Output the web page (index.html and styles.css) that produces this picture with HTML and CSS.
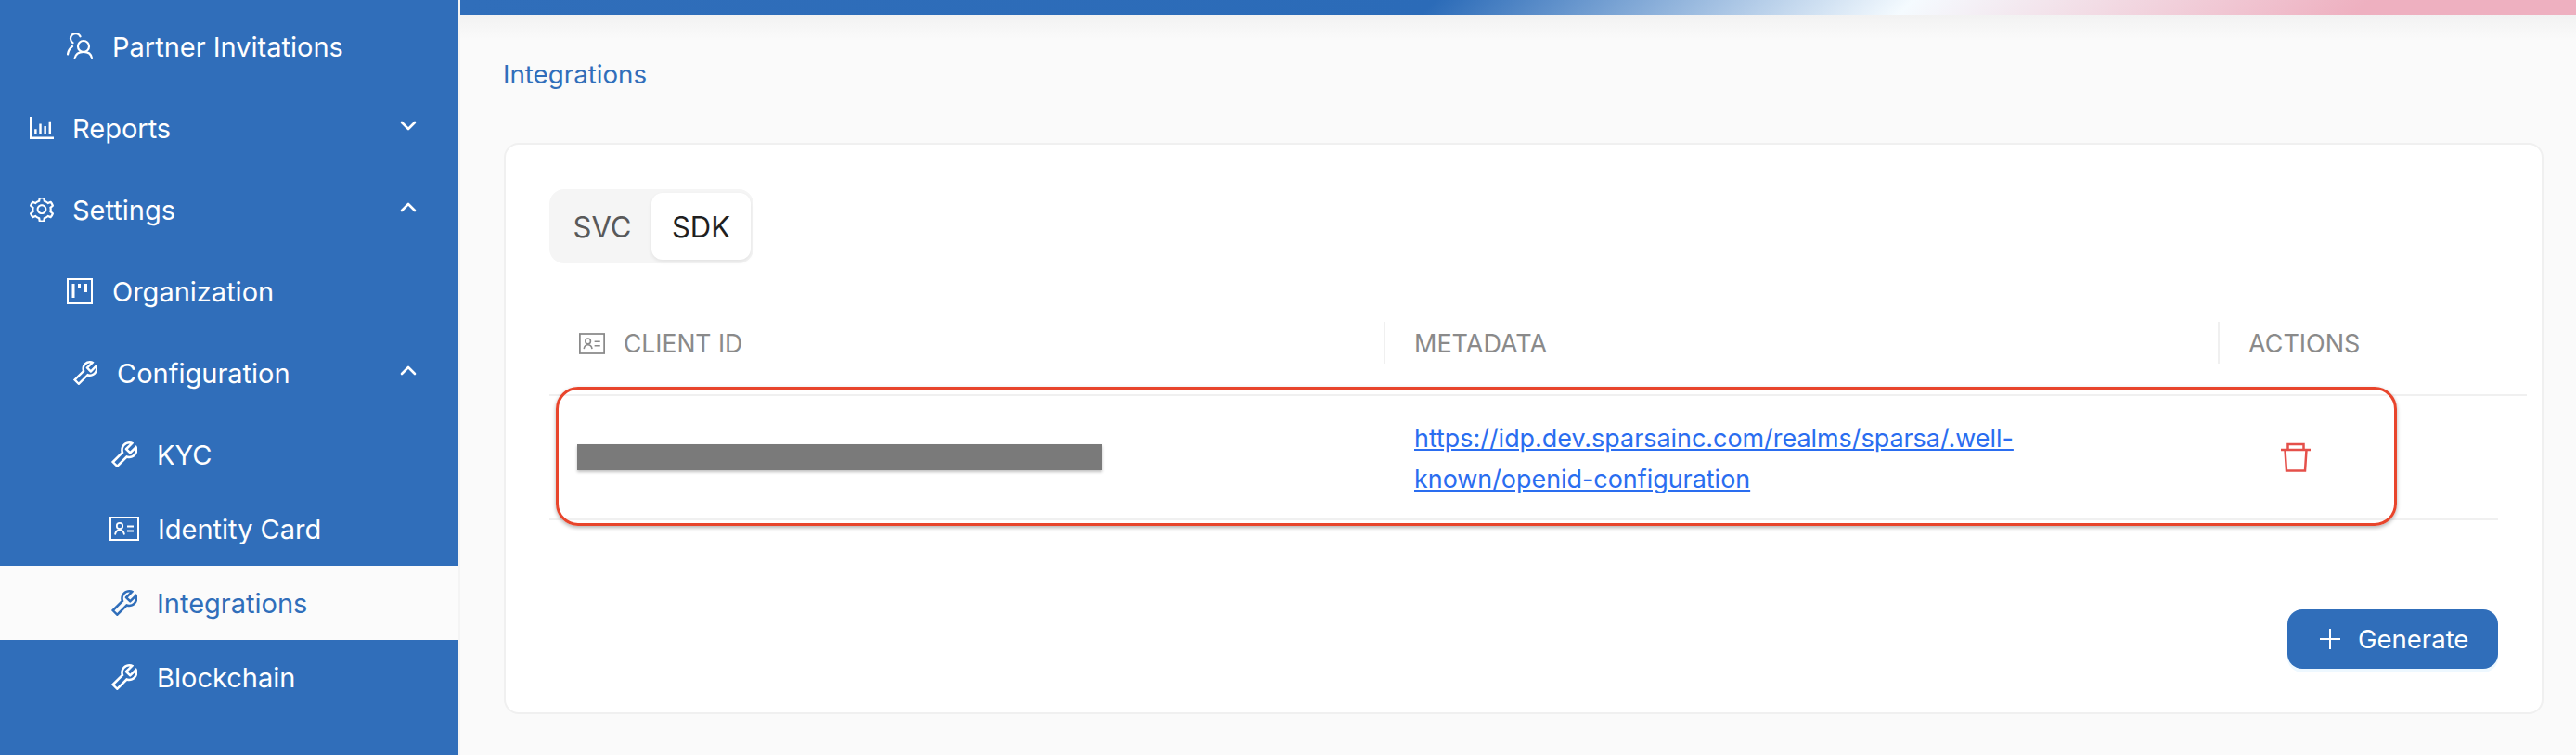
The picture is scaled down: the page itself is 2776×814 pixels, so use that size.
FILE: index.html
```html
<!DOCTYPE html>
<html>
<head>
    <title>Integrations</title>
    <link rel="stylesheet" href="styles.css">
</head>
<body>
    <svg class="sprite" width="0" height="0">
        <symbol id="i-tool" viewBox="112 112 790 790">
            <path d="M876.6 239.5c-.5-.9-1.2-1.8-2-2.5-5-5-13.1-5-18.1 0L684.2 409.3l-67.9-67.9L788.7 169c.8-.8 1.4-1.6 2-2.5 3.6-6.1 1.6-13.9-4.5-17.5-98.2-58-226.8-44.7-311.3 39.7-67 67-89.2 162-66.5 247.4l-293 293c-3 3-2.8 7.9.3 11l169.7 169.7c3.1 3.1 8.1 3.3 11 .3l292.9-292.9c85.5 22.8 180.5.7 247.6-66.4 84.4-84.5 97.7-213.1 39.7-311.3zM786 499.8c-58.1 58.1-145.3 69.3-214.6 33.6l-8.8 8.8-.1-.1-274 274.1-79.2-79.2 230.1-230.1s0 .1.1.1l52.8-52.8c-35.7-69.3-24.5-156.5 33.6-214.6a184.2 184.2 0 0 1 144-53.5L537 318.9a32.05 32.05 0 0 0 0 45.3l124.5 124.5a32.05 32.05 0 0 0 45.3 0l132.8-132.8c3.7 51.8-14.4 104.8-53.6 143.9z"/>
        </symbol>
        <symbol id="i-card" viewBox="0 0 32 26">
            <rect x="1" y="1" width="30" height="24" fill="none" stroke="currentColor" stroke-width="2"/>
            <circle cx="11" cy="10" r="3.2" fill="none" stroke="currentColor" stroke-width="1.8"/>
            <path d="M6 19.5c.5-3.5 2.5-5 5-5s4.500 1.500 5 5" fill="none" stroke="currentColor" stroke-width="1.8"/>
            <path d="M19 10.500h7M19 15.500h7" fill="none" stroke="currentColor" stroke-width="1.800"/>
        </symbol>
        <symbol id="i-up" viewBox="0 0 18 11">
            <path d="M2 9l7-7 7 7" fill="none" stroke="currentColor" stroke-width="2.600" stroke-linecap="round" stroke-linejoin="round"/>
        </symbol>
        <symbol id="i-down" viewBox="0 0 18 11">
            <path d="M2 2l7 7 7-7" fill="none" stroke="currentColor" stroke-width="2.600" stroke-linecap="round" stroke-linejoin="round"/>
        </symbol>
    </svg>

    <div class="app">
        <nav class="sidebar">
            <a class="nav-item sub">
                <svg class="icon line" viewBox="0 0 28 28" stroke-width="2.200" stroke-linecap="round">
                    <path d="M6.500 10.200A5.500 5.500 0 1 1 14.500 3.300"/>
                    <path d="M1 22.500C1.500 19 3 16 6 14"/>
                    <circle cx="18" cy="14" r="6"/>
                    <path d="M8.500 27C9.500 22 13 19.800 18 19.800S26.500 22 27 27"/>
                </svg>
                <span>Partner Invitations</span>
            </a>
            <a class="nav-item top">
                <svg class="icon" viewBox="128 160 768 704"><path d="M888 792H200V168c0-4.400-3.600-8-8-8h-56c-4.400 0-8 3.600-8 8v688c0 4.400 3.600 8 8 8h752c4.400 0 8-3.600 8-8v-56c0-4.400-3.600-8-8-8zm-600-80h56c4.400 0 8-3.600 8-8V560c0-4.400-3.600-8-8-8h-56c-4.400 0-8 3.600-8 8v144c0 4.400 3.600 8 8 8zm152 0h56c4.400 0 8-3.600 8-8V384c0-4.400-3.600-8-8-8h-56c-4.400 0-8 3.600-8 8v320c0 4.400 3.600 8 8 8zm152 0h56c4.400 0 8-3.600 8-8V462c0-4.400-3.600-8-8-8h-56c-4.400 0-8 3.600-8 8v242c0 4.400 3.600 8 8 8zm152 0h56c4.400 0 8-3.600 8-8V304c0-4.400-3.600-8-8-8h-56c-4.400 0-8 3.600-8 8v400c0 4.400 3.600 8 8 8z"/></svg>
                <span>Reports</span>
                <svg class="chev"><use href="#i-down"/></svg>
            </a>
            <a class="nav-item top">
                <svg class="icon" viewBox="88 88 848 848"><path d="M924.800 625.700l-65.500-56c3.100-19 4.700-38.400 4.700-57.800s-1.600-38.800-4.700-57.800l65.500-56a32.030 32.030 0 0 0 9.300-35.200l-.9-2.600a443.740 443.740 0 0 0-79.700-137.900l-1.800-2.100a32.120 32.120 0 0 0-35.100-9.500l-81.300 28.900c-30-24.600-63.500-44-99.700-57.600l-15.700-85a32.050 32.050 0 0 0-25.800-25.700l-2.700-.5c-52.100-9.400-106.900-9.400-159 0l-2.700.5a32.050 32.050 0 0 0-25.800 25.700l-15.800 85.400a351.860 351.860 0 0 0-99 57.400l-81.900-29.100a32 32 0 0 0-35.100 9.500l-1.800 2.100a446.020 446.020 0 0 0-79.700 137.900l-.9 2.600c-4.500 12.500-.8 26.500 9.300 35.200l66.300 56.600c-3.100 18.800-4.600 38-4.600 57.100 0 19.200 1.500 38.400 4.600 57.100L99 625.500a32.030 32.030 0 0 0-9.300 35.200l.9 2.600c18.100 50.400 44.900 96.900 79.700 137.900l1.800 2.100a32.120 32.120 0 0 0 35.100 9.500l81.900-29.100c29.800 24.500 63.100 43.900 99 57.400l15.800 85.400a32.050 32.050 0 0 0 25.800 25.700l2.700.5a449.400 449.400 0 0 0 159 0l2.700-.5a32.050 32.050 0 0 0 25.800-25.700l15.700-85a350 350 0 0 0 99.700-57.600l81.300 28.900a32 32 0 0 0 35.100-9.500l1.800-2.100c34.800-41.100 61.600-87.500 79.700-137.900l.9-2.600c4.500-12.300.8-26.300-9.300-35zM788.300 465.900c2.500 15.100 3.800 30.600 3.800 46.100s-1.300 31-3.800 46.100l-6.600 40.100 74.700 63.900a370.030 370.030 0 0 1-42.600 73.600L721 702.800l-31.400 25.800c-23.900 19.600-50.500 35-79.300 45.800l-38.100 14.300-17.900 97a377.500 377.500 0 0 1-85 0l-17.900-97.200-37.800-14.500c-28.500-10.800-55-26.200-78.700-45.700l-31.400-25.900-93.400 33.200c-17-22.900-31.200-47.600-42.600-73.600l75.500-64.500-6.500-40c-2.400-14.900-3.700-30.300-3.700-45.500 0-15.300 1.200-30.600 3.700-45.500l6.500-40-75.500-64.500c11.300-26.100 25.600-50.700 42.600-73.600l93.400 33.200 31.400-25.900c23.700-19.500 50.200-34.900 78.700-45.700l37.900-14.300 17.900-97.200c28.100-3.200 56.800-3.200 85 0l17.900 97 38.100 14.300c28.700 10.800 55.400 26.200 79.300 45.800l31.400 25.800 92.800-32.900c17 22.900 31.200 47.600 42.600 73.600L781.800 426l6.500 39.900zM512 326c-97.200 0-176 78.800-176 176s78.800 176 176 176 176-78.800 176-176-78.800-176-176-176zm79.200 255.200A111.600 111.600 0 0 1 512 614c-29.900 0-58-11.700-79.200-32.800A111.600 111.600 0 0 1 400 502c0-29.900 11.700-58 32.800-79.200C454 401.600 482.100 390 512 390c29.900 0 58 11.600 79.200 32.800A111.600 111.600 0 0 1 624 502c0 29.900-11.700 58-32.800 79.200z"/></svg>
                <span>Settings</span>
                <svg class="chev"><use href="#i-up"/></svg>
            </a>
            <a class="nav-item sub">
                <svg class="icon line" viewBox="0 0 28 28" stroke-width="2">
                    <rect x="1" y="1" width="26" height="26"/>
                    <path d="M7 6v15M13.500 6v4M20.500 6v9" stroke-width="3"/>
                </svg>
                <span>Organization</span>
            </a>
            <a class="nav-item sub tool-row">
                <svg class="icon"><use href="#i-tool"/></svg>
                <span>Configuration</span>
                <svg class="chev"><use href="#i-up"/></svg>
            </a>
            <a class="nav-item leaf">
                <svg class="icon"><use href="#i-tool"/></svg>
                <span>KYC</span>
            </a>
            <a class="nav-item leaf">
                <svg class="icon icon-card"><use href="#i-card"/></svg>
                <span>Identity Card</span>
            </a>
            <a class="nav-item leaf active">
                <svg class="icon"><use href="#i-tool"/></svg>
                <span>Integrations</span>
            </a>
            <a class="nav-item leaf">
                <svg class="icon"><use href="#i-tool"/></svg>
                <span>Blockchain</span>
            </a>
        </nav>

        <main class="main">
            <div class="topbar"></div>
            <div class="content">
                <div class="crumb">Integrations</div>
                <section class="card">
                    <div class="segmented">
                        <div class="seg-item">SVC</div>
                        <div class="seg-item selected">SDK</div>
                    </div>

                    <div class="thead">
                        <div class="th first">
                            <svg class="th-icon"><use href="#i-card"/></svg>
                            <span class="th-label">CLIENT ID</span>
                        </div>
                        <div class="th">METADATA</div>
                        <div class="th">ACTIONS</div>
                    </div>

                    <div class="trow">
                        <div class="td-client"><div class="redacted"></div></div>
                        <div class="td-meta">
                            <a class="meta-link" href="#">https://idp.dev.sparsainc.com/realms/sparsa/.well-known/openid-configuration</a>
                        </div>
                        <div class="td-actions">
                            <svg class="trash" viewBox="0 0 32 32" fill="none" stroke="currentColor" stroke-width="2.500">
                                <path d="M0 8h32"/>
                                <path d="M7.500 8V2h17v6"/>
                                <path d="M4.500 8l1.500 22.500h20L27.500 8"/>
                            </svg>
                        </div>
                    </div>

                    <div class="card-foot">
                        <button class="btn-generate">
                            <svg class="plus" viewBox="0 0 24 24" fill="none" stroke="currentColor" stroke-width="2"><path d="M12 1v22M1 12h22"/></svg>
                            Generate
                        </button>
                    </div>

                    <!-- annotation drawn on top of the screenshot -->
                    <div class="highlight"></div>
                </section>
            </div>
        </main>
    </div>
</body>
</html>
```

FILE: styles.css
```css
* {
    box-sizing: border-box;
}
html, body {
    margin: 0;
    height: 100%;
    overflow: hidden;
}
body {
    font-family: Inter, "Noto Sans", sans-serif;
    font-size: 28px;
    background: #fafafa;
}
.sprite {
    position: absolute;
}
.app {
    display: flex;
    height: 814px;
}

/* sidebar */
.sidebar {
    width: 496px;
    flex: none;
    padding-top: 10px;
    background: #306eba;
    border-right: 2px solid #f4f4f4;
    font-size: 29px;
    color: #fff;
}
.nav-item {
    display: flex;
    align-items: center;
    height: 80px;
    margin-bottom: 8px;
    padding: 0 45px 0 32px;
    gap: 21px;
}
.nav-item.top {
    gap: 20px;
}
.nav-item.sub {
    padding-left: 72px;
}
.nav-item.tool-row {
    padding-left: 79px;
}
.nav-item.leaf {
    margin-bottom: 0;
    padding-left: 120px;
}
.nav-item.active {
    background: #fbfbfb;
    color: #306eba;
}
.icon {
    width: 28px;
    height: 28px;
    flex: none;
    fill: currentColor;
}
.icon.line {
    fill: none;
    stroke: currentColor;
}
.top .icon,
.tool-row .icon {
    width: 26px;
    height: 26px;
}
.icon-card {
    width: 32px;
    height: 26px;
    margin: 0 -1px 0 -2px;
}
.chev {
    width: 18px;
    height: 11px;
    margin-left: auto;
    margin-top: -6px;
}

/* main area */
.main {
    flex: 1;
    min-width: 0;
    display: flex;
    flex-direction: column;
}
.topbar {
    height: 16px;
    flex: none;
    background: linear-gradient(135deg, #306eba 0%, #2b6bb8 45.8%, #f5fbff 68.2%, #eeb0c0 89.6%, #eeb0c0 100%);
}
.content {
    flex: 1;
    padding: 46px 35px 0 47px;
    background: linear-gradient(#f2f2f2, #fafafa 26px);
}
.crumb {
    height: 36px;
    line-height: 36px;
    margin: 0 0 56px -1px;
    font-size: 27.7px;
    color: #306eba;
}
.card {
    position: relative;
    height: 616px;
    padding: 48px 47px 47px;
    background: #fff;
    border: 2px solid #f0f0f0;
    border-radius: 16px;
}

/* SVC / SDK switch */
.segmented {
    display: inline-flex;
    width: 220px;
    height: 80px;
    padding: 4px 4px;
    background: #f5f5f5;
    border-radius: 16px;
    font-size: 31px;
    color: #595959;
}
.seg-item {
    display: flex;
    align-items: center;
    justify-content: center;
    flex: 1;
    border-radius: 12px;
}
.seg-item.selected {
    flex: none;
    width: 107px;
    margin-right: -1px;
    background: #fff;
    color: #1f1f1f;
    box-shadow: 0 2px 4px rgba(0, 0, 0, 0.08);
}

/* table */
.thead,
.trow {
    display: grid;
    grid-template-columns: 899px 899px 1fr;
}
.thead {
    margin-top: 40px;
    margin-right: -31px;
    padding: 23px 0 33px;
    border-bottom: 2px solid #f0f0f0;
    font-size: 27px;
    color: #8a8a8a;
}
.th {
    display: flex;
    align-items: center;
    height: 45px;
    padding: 1px 0 0 31px;
    border-left: 2px solid #f0f0f0;
}
.th.first {
    border-left: 0;
    padding-left: 32px;
    gap: 20px;
}
.th-label {
    font-size: 26.5px;
}
.th-icon {
    width: 28px;
    height: 23px;
}
.trow {
    height: 134px;
    align-items: center;
    border-bottom: 2px solid #f0f0f0;
}
.td-client {
    padding-left: 30px;
}
.redacted {
    width: 566px;
    height: 28px;
    background: #7a7a7a;
    box-shadow: 0 2px 3px rgba(0, 0, 0, 0.25);
}
.td-meta {
    padding: 2px 0 0 33px;
}
.meta-link {
    display: block;
    max-width: 680px;
    line-height: 44px;
    font-size: 26.9px;
    color: #2a6df0;
    text-decoration: underline;
}
.td-actions {
    display: flex;
    padding-left: 68px;
}
.trash {
    width: 32px;
    height: 32px;
    color: #e5504a;
}

/* footer */
.card-foot {
    display: flex;
    justify-content: flex-end;
    margin-top: 96px;
}
.btn-generate {
    display: flex;
    align-items: center;
    gap: 18px;
    width: 227px;
    height: 64px;
    padding: 0 0 0 34px;
    background: #306eba;
    border: 0;
    border-radius: 16px;
    box-shadow: 0 4px 0 #eef8ff;
    font-family: inherit;
    font-size: 27.5px;
    color: #fff;
}
.plus {
    width: 24px;
    height: 24px;
}

/* red annotation */
.highlight {
    position: absolute;
    top: 261px;
    left: 54px;
    width: 1984px;
    height: 150px;
    border: 3px solid #e8452c;
    border-radius: 24px;
    box-shadow: 0 2px 4px rgba(0, 0, 0, 0.3);
}
```
